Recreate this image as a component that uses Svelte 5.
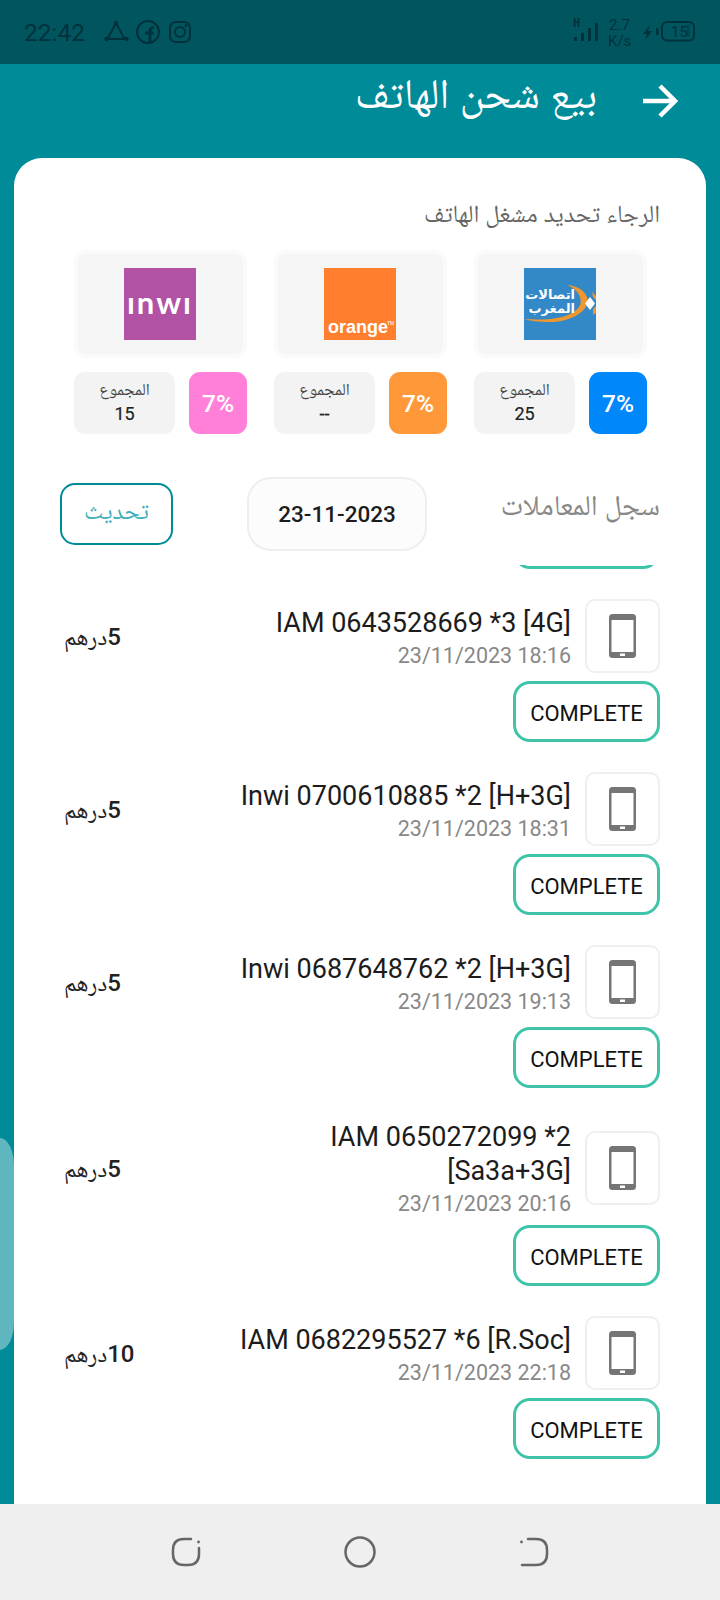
<script>
  const stats = [
    { key: 'iam', total: '25', color: '#0088fb' },
    { key: 'orange', total: '--', color: '#ff9838' },
    { key: 'inwi', total: '15', color: '#ff7fd9' }
  ];
  const items = [
    { text: 'IAM 0643528669 *3 [4G]', date: '23/11/2023 18:16', amount: '5' },
    { text: 'Inwi 0700610885 *2 [H+3G]', date: '23/11/2023 18:31', amount: '5' },
    { text: 'Inwi 0687648762 *2 [H+3G]', date: '23/11/2023 19:13', amount: '5' },
    { text: 'IAM 0650272099 *2 [Sa3a+3G]', date: '23/11/2023 20:16', amount: '5' },
    { text: 'IAM 0682295527 *6 [R.Soc]', date: '23/11/2023 22:18', amount: '10' }
  ];
</script>

<div class="screen">
  <div class="status">
    <span class="time">22:42</span>
    <svg class="st-left" width="92" height="26" viewBox="0 0 92 26" fill="none" stroke="#00323c" stroke-width="2">
      <path d="M12 4 L4 19 M12 4 L20 19 M3 20 H23" stroke-linecap="round" />
      <circle cx="12" cy="4" r="2.2" fill="#00323c" stroke="none" />
      <circle cx="2.5" cy="20" r="2.2" fill="#00323c" stroke="none" />
      <circle cx="22.5" cy="20" r="2.2" fill="#00323c" stroke="none" />
      <circle cx="44" cy="13" r="11" />
      <path d="M46 24 V12 Q46 8.500 50 8.500 M41 14 H49.500" stroke-width="3" />
      <rect x="66" y="3" width="20" height="20" rx="5.500" />
      <circle cx="76" cy="13" r="5" />
      <circle cx="82" cy="6.500" r="1.400" fill="#00323c" stroke="none" />
    </svg>
    <span class="spacer"></span>
    <svg class="st-right" width="124" height="40" viewBox="0 0 124 40" fill="#00323c">
      <text x="2" y="15" class="tiny">H</text>
      <rect x="3" y="25" width="3" height="4" />
      <rect x="10" y="21" width="3" height="8" />
      <rect x="17" y="16" width="3" height="13" />
      <rect x="24" y="11" width="3" height="18" />
      <text x="38" y="18" class="speed">2.7</text>
      <text x="37" y="34" class="speed">K/s</text>
      <path d="M79 13 L72 22 H76 L74 28 L81 19 H77 Z" />
      <rect x="85" y="16" width="2.500" height="7" />
      <rect x="91" y="10" width="32" height="18.500" rx="5" fill="none" stroke="#00323c" stroke-width="2" />
      <text x="100" y="25" class="speed">15</text>
      <rect x="116" y="13" width="3" height="12" opacity="0.4" />
    </svg>
  </div>

  <div class="header">
    <h1 class="head-title">بيع شحن الهاتف</h1>
    <svg class="arrow" width="36" height="34" viewBox="0 0 36 34" fill="none" stroke="#fff" stroke-width="4.500">
      <path d="M1 17 H33 M18 2 L33 17 L18 32" />
    </svg>
  </div>

  <main class="card">
    <p class="prompt">الرجاء تحديد مشغل الهاتف</p>

    <div class="ops">
      {#each stats as s}
        <div class="op">
          <div class="tile">
            {#if s.key === 'iam'}
              <svg width="72" height="72" viewBox="0 0 72 72">
                <rect width="72" height="72" fill="#3388c7" />
                <path d="M43 17 C58 18 66 28 63 36 C60 47 40 55 24 54 C14 54 6 53 0 51 C16 52 34 52 46 46 C56 41 58 36 56 29 C54 23 48 19 43 17Z" fill="#f0962e" />
                <path d="M68 24 L72 28 V32 L69 29Z M69 41 L72 38 V45 L69 47Z" fill="#f0962e" />
                <path d="M66 29 L71 35.500 L66 42 L61 35.500Z" fill="#fff" />
                <text x="51" y="31" text-anchor="end" class="iam-t">اتصالات</text>
                <text x="51" y="45" text-anchor="end" class="iam-t">المغرب</text>
              </svg>
            {:else if s.key === 'orange'}
              <svg width="72" height="72" viewBox="0 0 72 72">
                <rect width="72" height="72" fill="#ff7f2e" />
                <text x="4" y="65" class="or-t">orange</text>
                <text x="63" y="57" class="or-tm">TM</text>
              </svg>
            {:else}
              <svg width="72" height="72" viewBox="0 0 72 72">
                <rect width="72" height="72" fill="#b152a5" />
                <text x="36" y="46" text-anchor="middle" class="in-t">ınwı</text>
              </svg>
            {/if}
          </div>
          <div class="op-stats">
            <div class="pct" style="background:{s.color}">7%</div>
            <div class="total">
              <span class="total-l">المجموع</span>
              <span class="total-v">{s.total}</span>
            </div>
          </div>
        </div>
      {/each}
    </div>

    <div class="log-head">
      <span class="log-title">سجل المعاملات</span>
      <span class="date">23-11-2023</span>
      <button class="refresh">تحديث</button>
    </div>

    <div class="list">
      <div class="status-row sliver"><span class="pill"></span></div>
      {#each items as it}
        <div class="item">
          <div class="row">
            <div class="phone">
              <svg width="27" height="44" viewBox="0 0 27 44">
                <rect width="27" height="44" rx="3.500" fill="#757575" />
                <rect x="2.500" y="6" width="22" height="32" fill="#fff" />
                <rect x="11" y="39.500" width="5" height="2.500" fill="#fff" />
              </svg>
            </div>
            <div class="info">
              <div class="name" dir="ltr">{it.text}</div>
              <div class="when" dir="ltr">{it.date}</div>
            </div>
            <div class="amount"><b>{it.amount}</b>درهم</div>
          </div>
          <div class="status-row"><span class="pill">COMPLETE</span></div>
        </div>
      {/each}
    </div>
  </main>

  <div class="handle"></div>

  <nav class="nav">
    <svg width="30" height="30" viewBox="0 0 30 30" fill="none" stroke="#666" stroke-width="2.500" stroke-linecap="round">
      <path d="M20 2 H13 Q2 2 2 13 V17 Q2 28 13 28 H17 Q28 28 28 17 V11" />
      <circle cx="27.500" cy="5" r="1.400" fill="#666" stroke="none" />
    </svg>
    <svg width="32" height="32" viewBox="0 0 32 32" fill="none" stroke="#666" stroke-width="2.500">
      <ellipse cx="16" cy="16" rx="14.500" ry="14.500" />
    </svg>
    <svg width="30" height="30" viewBox="0 0 30 30" fill="none" stroke="#666" stroke-width="2.500" stroke-linecap="round">
      <path d="M9 2 H17 Q28 2 28 13 V17 Q28 28 17 28 H3" />
      <circle cx="2.500" cy="5" r="1.400" fill="#666" stroke="none" />
    </svg>
  </nav>
</div>

<style>
  :global(body) { margin: 0; background: #008b98; }
  svg { direction: ltr; flex: none; }
  .screen {
    position: relative;
    width: 720px;
    height: 1600px;
    display: flex;
    flex-direction: column;
    overflow: hidden;
    background: #008b98;
    font-family: Roboto, "Noto Naskh Arabic", "Droid Arabic Naskh", "Noto Sans Arabic", "DejaVu Sans", sans-serif;
  }
  .status {
    height: 64px;
    flex: none;
    background: #00555f;
    display: flex;
    align-items: center;
    padding: 0 25px 0 24px;
    box-sizing: border-box;
  }
  .time { font-size: 24.5px; color: #00323c; }
  .st-left { margin-left: 19px; }
  .spacer { flex: 1; }
  .tiny { font: 700 12px "DejaVu Sans Mono", monospace; }
  .speed { font: 400 15px Roboto, sans-serif; }
  .header {
    height: 94px;
    flex: none;
    direction: rtl;
    display: flex;
    align-items: flex-start;
    padding: 20px 42px 0 0;
    box-sizing: border-box;
  }
  .head-title {
    margin: -15px 45px 0 0;
    font-size: 42px;
    line-height: 50px;
    font-weight: 400;
    color: #fff;
    order: 2;
  }
  .card {
    flex: 1;
    min-height: 0;
    margin: 0 14px;
    padding: 0 46px;
    background: #fff;
    border-radius: 28px 28px 0 0;
    direction: rtl;
    display: flex;
    flex-direction: column;
  }
  .prompt {
    margin: 41px 0 0;
    font-size: 24.6px;
    line-height: 30px;
    color: #666;
    flex: none;
  }
  .ops {
    margin: 21px 13px 0 14px;
    display: grid;
    grid-template-columns: repeat(3, 173px);
    justify-content: space-between;
    flex: none;
  }
  .op { display: flex; flex-direction: column; gap: 14px; }
  .tile {
    height: 108px;
    box-sizing: border-box;
    border: 4px solid #fafafa;
    background: #f5f5f5;
    border-radius: 12px;
    display: flex;
    align-items: center;
    justify-content: center;
    padding-right: 2px;
  }
  .op-stats { display: flex; justify-content: space-between; height: 62px; }
  .pct {
    width: 58px;
    border-radius: 11px;
    color: #fff;
    font-size: 24.5px;
    font-weight: 500;
    display: flex;
    align-items: center;
    justify-content: center;
    direction: ltr;
  }
  .total {
    width: 101px;
    border-radius: 11px;
    background: #f3f3f3;
    display: flex;
    flex-direction: column;
    align-items: center;
    justify-content: center;
    gap: 3px;
  }
  .total-l { font-size: 16.8px; color: #444; line-height: 20px; margin-top: -1px; }
  .total-v { font-size: 18px; font-weight: 400; color: #222; line-height: 24px; -webkit-text-stroke: 0.2px #222; }
  .iam-t { font: 700 13px "DejaVu Sans", sans-serif; fill: #fff; }
  .or-t { font: 700 18px "Liberation Sans", sans-serif; fill: #fff; }
  .or-tm { font: 400 5px "Liberation Sans", sans-serif; fill: #fff; }
  .in-t { font: 700 31px Lato, sans-serif; fill: #fff; letter-spacing: 2px; }
  .log-head {
    margin-top: 43px;
    height: 74px;
    display: flex;
    align-items: center;
    flex: none;
  }
  .log-title { flex: 1; font-size: 28.8px; line-height: 50px; color: #888; margin-top: -19px; }
  .date {
    width: 180px;
    height: 74px;
    box-sizing: border-box;
    border: 2px solid #eee;
    border-radius: 24px;
    background: #fcfcfc;
    display: flex;
    align-items: center;
    justify-content: center;
    font-size: 22.5px;
    font-weight: 500;
    color: #1c1c1c;
    margin-left: 74px;
  }
  .refresh {
    width: 113px;
    height: 62px;
    box-sizing: border-box;
    border: 2px solid #008b98;
    border-radius: 15px;
    background: #fff;
    color: #3fb0bc;
    font-family: inherit;
    font-size: 24.5px;
    padding: 0;
  }
  .list {
    margin-top: 14px;
    flex: 1;
    min-height: 0;
    overflow: hidden;
    display: flex;
    flex-direction: column;
    gap: 30px;
  }
  .sliver { margin-top: -57px; }
  .item { display: flex; flex-direction: column; gap: 8px; flex: none; }
  .row { display: flex; align-items: center; gap: 14px; }
  .phone {
    width: 75px;
    height: 74px;
    flex: none;
    box-sizing: border-box;
    border: 2px solid #efefef;
    border-radius: 10px;
    display: flex;
    align-items: center;
    justify-content: center;
  }
  .info { max-width: 345px; text-align: right; padding-top: 2px; margin-bottom: -2px; }
  .name { font-size: 27px; line-height: 34px; color: #1c1c1c; text-align: right; }
  .when { font-size: 21.5px; line-height: 31px; color: #888; text-align: right; }
  .amount {
    margin-right: auto;
    padding: 8px 6px 0 0;
    padding-left: 4px;
    font-size: 23.5px;
    color: #222;
    white-space: nowrap;
  }
  .amount b { font-weight: 500; font-size: 24px; }
  .status-row { display: flex; }
  .pill {
    width: 147px;
    height: 61px;
    box-sizing: border-box;
    border: 3px solid #3fc4aa;
    border-radius: 17px;
    background: #fff;
    display: flex;
    align-items: center;
    justify-content: center;
    font-size: 22px;
    color: #111;
    direction: ltr;
    padding-top: 3px;
  }
  .handle {
    position: absolute;
    left: 0;
    top: 1138px;
    width: 14px;
    height: 212px;
    background: #5fb6bf;
    border-radius: 0 14px 14px 0 / 0 28px 28px 0;
  }
  .nav {
    height: 96px;
    flex: none;
    background: #efefef;
    display: grid;
    grid-template-columns: 174px 174px 174px;
    justify-content: center;
    justify-items: center;
    align-items: center;
    box-sizing: border-box;
  }
</style>
